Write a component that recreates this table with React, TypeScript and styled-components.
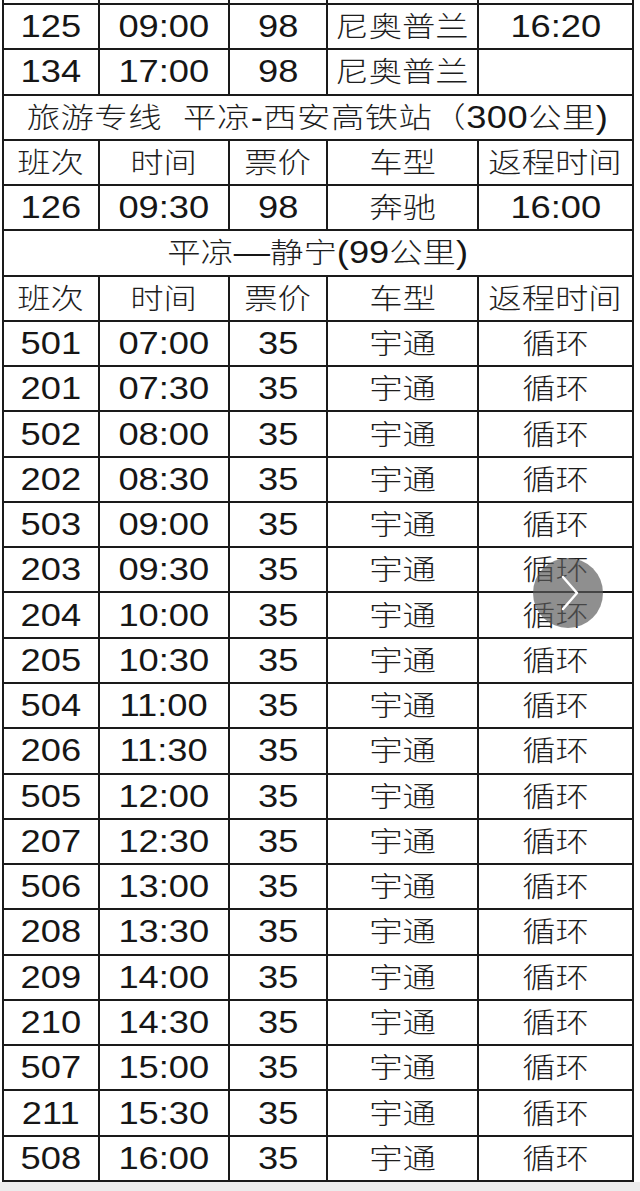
import React from 'react';
import styled, { createGlobalStyle } from 'styled-components';

const GlobalStyle = createGlobalStyle`
    html, body {
        margin: 0;
        padding: 0;
    }
    body {
        background: #ececec;
        font-family: "Liberation Sans", "Noto Sans CJK SC", sans-serif;
        color: #161616;
    }
`;

const Page = styled.div`
    position: relative;
    width: 640px;
    padding-left: 2px;
    box-sizing: border-box;
    background: #fff;
`;

const Sheet = styled.div`
    width: 632px;
    border-left: 2px solid #1a1a1a;
    box-sizing: border-box;
`;

const Row = styled.div<{ $cut?: boolean; $span?: boolean }>`
    display: grid;
    grid-template-columns: ${({ $span }) => ($span ? '1fr' : '96px 130px 98px 151px 155px')};
    height: ${({ $cut }) => ($cut ? '5px' : '45.27px')};
    border-bottom: 2px solid #1a1a1a;
    box-sizing: border-box;
`;

const Cell = styled.div`
    display: flex;
    align-items: center;
    justify-content: center;
    overflow: hidden;
    border-right: 2px solid #1a1a1a;
    box-sizing: border-box;
`;

// the photo is stretched sideways, so the text is too
const Txt = styled.span<{ $spread?: number }>`
    display: inline-block;
    transform: scaleX(1.17);
    white-space: pre;
    font-size: 31px;
    line-height: 1;
    letter-spacing: ${({ $spread }) => $spread || 0}px;
`;

const Han = styled.span`
    font-size: 28.5px;
    font-weight: 300;
    color: #1e1e1e;
`;

const NextButton = styled.div`
    position: absolute;
    left: 533px;
    top: 558px;
    width: 70px;
    height: 70px;
    border-radius: 50%;
    background: rgba(90, 90, 90, 0.68);
    display: flex;
    align-items: center;
    justify-content: center;
`;

const HAN = /([\u2e80-\u9fff\u3000-\u303f\uff00-\uffef]+)/;

const Text: React.FC<{ value: string; spread?: number }> = ({ value, spread }) => {
    const parts = value.split(HAN).filter(Boolean);
    return (
        <Txt $spread={spread}>
            {parts.map((p, i) => (HAN.test(p) ? <Han key={i}>{p}</Han> : p))}
        </Txt>
    );
};

const HEAD = ['班次', '时间', '票价', '车型', '返程时间'];

const jingning = [
    ['501', '07:00'],
    ['201', '07:30'],
    ['502', '08:00'],
    ['202', '08:30'],
    ['503', '09:00'],
    ['203', '09:30'],
    ['204', '10:00'],
    ['205', '10:30'],
    ['504', '11:00'],
    ['206', '11:30'],
    ['505', '12:00'],
    ['207', '12:30'],
    ['506', '13:00'],
    ['208', '13:30'],
    ['209', '14:00'],
    ['210', '14:30'],
    ['507', '15:00'],
    ['211', '15:30'],
    ['508', '16:00'],
];

type Line = { title: string; spread?: number } | string[];

const lines: Line[] = [
    ['125', '09:00', '98', '尼奥普兰', '16:20'],
    ['134', '17:00', '98', '尼奥普兰', ''],
    { title: '旅游专线  平凉-西安高铁站（300公里)', spread: 0.4 },
    HEAD,
    ['126', '09:30', '98', '奔驰', '16:00'],
    { title: '平凉—静宁(99公里)' },
    HEAD,
    ...jingning.map(([no, time]) => [no, time, '35', '宇通', '循环']),
];

export default function App() {
    return (
        <Page>
            <GlobalStyle />
            <Sheet>
                <Row $cut>
                    {HEAD.map((h) => (
                        <Cell key={h} />
                    ))}
                </Row>
                {lines.map((line, i) =>
                    Array.isArray(line) ? (
                        <Row key={i}>
                            {line.map((v, j) => (
                                <Cell key={j}>{v && <Text value={v} />}</Cell>
                            ))}
                        </Row>
                    ) : (
                        <Row key={i} $span>
                            <Cell>
                                <Text value={line.title} spread={line.spread} />
                            </Cell>
                        </Row>
                    )
                )}
            </Sheet>
            <NextButton>
                <svg width="70" height="70" viewBox="0 0 70 70">
                    <polyline
                        points="30,19 44,35 30,51"
                        fill="none"
                        stroke="#fff"
                        strokeWidth="2.5"
                        strokeLinecap="round"
                        strokeLinejoin="round"
                    />
                </svg>
            </NextButton>
        </Page>
    );
}
